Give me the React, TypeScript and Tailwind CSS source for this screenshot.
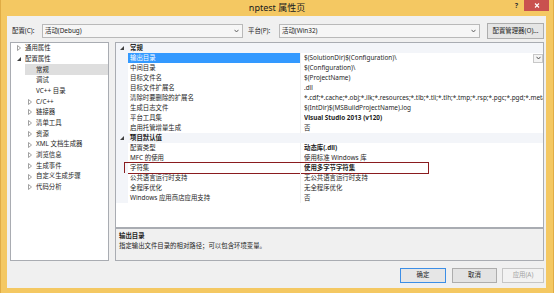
import React from "react";

type TreeItem = { label: string; level: 0 | 1; arrow?: "open" | "closed"; selected?: boolean };

const tree: TreeItem[] = [
  { label: "通用属性", level: 0, arrow: "closed" },
  { label: "配置属性", level: 0, arrow: "open" },
  { label: "常规", level: 1, selected: true },
  { label: "调试", level: 1 },
  { label: "VC++ 目录", level: 1 },
  { label: "C/C++", level: 1, arrow: "closed" },
  { label: "链接器", level: 1, arrow: "closed" },
  { label: "清单工具", level: 1, arrow: "closed" },
  { label: "资源", level: 1, arrow: "closed" },
  { label: "XML 文档生成器", level: 1, arrow: "closed" },
  { label: "浏览信息", level: 1, arrow: "closed" },
  { label: "生成事件", level: 1, arrow: "closed" },
  { label: "自定义生成步骤", level: 1, arrow: "closed" },
  { label: "代码分析", level: 1, arrow: "closed" },
];

type Row = {
  cat?: string;
  name?: string;
  value?: string;
  bold?: boolean;
  selected?: boolean;
  boxed?: boolean;
};

const rows: Row[] = [
  { cat: "常规" },
  { name: "输出目录", value: "$(SolutionDir)$(Configuration)\\", selected: true },
  { name: "中间目录", value: "$(Configuration)\\" },
  { name: "目标文件名", value: "$(ProjectName)" },
  { name: "目标文件扩展名", value: ".dll" },
  {
    name: "清除时要删除的扩展名",
    value: "*.cdf;*.cache;*.obj;*.ilk;*.resources;*.tlb;*.tli;*.tlh;*.tmp;*.rsp;*.pgc;*.pgd;*.meta;*.tl",
  },
  { name: "生成日志文件", value: "$(IntDir)$(MSBuildProjectName).log" },
  { name: "平台工具集", value: "Visual Studio 2013 (v120)", bold: true },
  { name: "启用托管增量生成", value: "否" },
  { cat: "项目默认值" },
  { name: "配置类型", value: "动态库(.dll)", bold: true },
  { name: "MFC 的使用", value: "使用标准 Windows 库" },
  { name: "字符集", value: "使用多字节字符集", bold: true, boxed: true },
  { name: "公共语言运行时支持", value: "无公共语言运行时支持" },
  { name: "全程序优化", value: "无全程序优化" },
  { name: "Windows 应用商店应用支持", value: "否" },
];

function Chevron({ color = "#555" }: { color?: string }) {
  return (
    <svg width="5" height="4" viewBox="0 0 5 4">
      <path d="M0.5 0.8 L2.5 3 L4.5 0.8" fill="none" stroke={color} strokeWidth="0.9" />
    </svg>
  );
}

function ClosedArrow() {
  return (
    <svg width="4" height="6" viewBox="0 0 4 6">
      <path d="M0.5 0.5 L3.5 3 L0.5 5.5 Z" fill="none" stroke="#8a8a8a" strokeWidth="0.8" />
    </svg>
  );
}

function OpenArrow() {
  return (
    <svg width="4" height="4" viewBox="0 0 4 4">
      <path d="M4 0 L4 4 L0 4 Z" fill="#404040" />
    </svg>
  );
}

function Combo({ text }: { text: string }) {
  return (
    <div className="w-[201px] h-[14px] border border-[#b9b9b9] bg-[#f6f6f6] flex items-center justify-between pl-[2px] pr-[3px]">
      <span>{text}</span>
      <Chevron />
    </div>
  );
}

function TreePanel() {
  return (
    <div className="w-[99px] h-full border border-[#a9acb2] bg-white flex flex-col">
      {tree.map((t, i) => (
        <div
          key={i}
          className={`h-[10.7px] shrink-0 flex items-stretch ${t.level === 0 ? "pl-[3px]" : "pl-[14px]"}`}
        >
          <div className={`flex-1 flex items-center ${t.selected ? "bg-[#dedede]" : ""}`}>
            <div className="w-[11px] pl-[3px] flex items-center">
              {t.arrow === "closed" && <ClosedArrow />}
              {t.arrow === "open" && <OpenArrow />}
            </div>
            <span className="whitespace-nowrap">{t.label}</span>
          </div>
        </div>
      ))}
    </div>
  );
}

function PropertyGrid() {
  return (
    <div className="h-[186px] border border-[#a9acb2] bg-white flex flex-col">
      {rows.map((r, i) =>
        r.cat ? (
          <div key={i} className="h-[10px] shrink-0 flex items-center bg-[#f3f5f9]">
            <div className="w-[12px] flex items-center justify-center">
              <OpenArrow />
            </div>
            <span className="pl-[2px] font-bold">{r.cat}</span>
          </div>
        ) : (
          <div key={i} className="h-[10px] shrink-0 flex items-stretch relative">
            <div className="w-[12px] bg-[#f3f5f9]" />
            <div
              className={`w-[172px] flex items-center pl-[2px] whitespace-nowrap ${
                r.selected ? "bg-[#3399ff] text-white" : ""
              }`}
            >
              {r.name}
            </div>
            <div className="flex-1 min-w-0 flex items-center pl-[3px] border-l border-[#f0f0f0]">
              <span
                className={`flex-1 min-w-0 whitespace-nowrap overflow-x-clip leading-[10px] ${
                  r.bold ? "font-bold" : ""
                }`}
              >
                {r.value}
              </span>
              {r.selected && (
                <div className="w-[10px] h-[9px] border border-[#c8c8c8] bg-[#f4f4f4] flex items-center justify-center shrink-0">
                  <Chevron color="#444" />
                </div>
              )}
            </div>
            {r.boxed && (
              <div className="absolute left-[8px] top-[-1px] w-[305px] h-[12px] border-[1.5px] border-[#8a1c1f]" />
            )}
          </div>
        )
      )}
    </div>
  );
}

function Button({
  children,
  width,
  variant = "normal",
}: {
  children: React.ReactNode;
  width: string;
  variant?: "normal" | "default" | "disabled";
}) {
  const cls =
    variant === "default"
      ? "border-[#3c8ee6] bg-[#e6e6e6] text-[#1e1e1e]"
      : variant === "disabled"
      ? "border-[#c6c6c6] bg-[#f2f2f2] text-[#a2a2a2]"
      : "border-[#adadad] bg-[#e3e3e3] text-[#1e1e1e]";
  return (
    <div className={`${width} h-full border flex items-center justify-center ${cls}`}>{children}</div>
  );
}

export default function App() {
  return (
    <div className="w-[554px] h-[293px] bg-[#f4c862] border-l border-r border-[#e0ac45] flex flex-col font-['Noto_Sans','Noto_Sans_CJK_SC',sans-serif] text-[6.4px] leading-none text-[#1e1e1e] overflow-hidden">
      {/* title bar */}
      <div className="h-[16px] shrink-0 grid grid-cols-[1fr_auto_1fr] items-start">
        <div />
        <div className="pt-[3px] text-[9px] leading-[10px] text-[#202020] whitespace-nowrap">nptest 属性页</div>
        <div className="flex justify-end items-start pr-[4px]">
          <span className="mt-[2px] mr-[6px] text-[7px] font-bold text-[#333]">?</span>
          <div className="w-[25px] h-[11px] bg-[#c9514f] flex items-center justify-center">
            <svg width="6" height="5" viewBox="0 0 6 5">
              <path d="M1 0.5 L5 4.5 M5 0.5 L1 4.5" stroke="white" strokeWidth="1.1" />
            </svg>
          </div>
        </div>
      </div>

      {/* client area */}
      <div className="flex-1 ml-[6px] mr-[7px] mb-[5px] bg-[#f0f0f0] flex flex-col">
        {/* config row */}
        <div className="mt-[7px] h-[16px] shrink-0 flex items-center pl-[5px] pr-[2px]">
          <span className="w-[30px] whitespace-nowrap">配置(C):</span>
          <Combo text="活动(Debug)" />
          <span className="ml-[5px] w-[31px] whitespace-nowrap">平台(P):</span>
          <Combo text="活动(Win32)" />
          <div className="ml-[7px] w-[57px] h-[16px] border border-[#adadad] bg-[#e5e5e5] flex items-center justify-center whitespace-nowrap">
            配置管理器(O)...
          </div>
        </div>

        {/* main */}
        <div className="mt-[3px] h-[219px] shrink-0 flex pl-[3px] pr-[2px] gap-[6px]">
          <TreePanel />
          <div className="flex-1 min-w-0 flex flex-col">
            <PropertyGrid />
            <div className="flex-1 border border-[#a9acb2] bg-[#f0f0f0] pl-[3px] pt-[2px] flex flex-col">
              <div className="h-[10px] flex items-center font-bold">输出目录</div>
              <div className="h-[10px] flex items-center">指定输出文件目录的相对路径；可以包含环境变量。</div>
            </div>
          </div>
        </div>

        {/* buttons */}
        <div className="mt-[7px] h-[15px] shrink-0 flex justify-end pr-[2px]">
          <Button width="w-[46px]" variant="default">
            确定
          </Button>
          <div className="w-[6px]" />
          <Button width="w-[45px]">取消</Button>
          <div className="w-[5px]" />
          <Button width="w-[42px]" variant="disabled">
            应用(A)
          </Button>
        </div>
      </div>
    </div>
  );
}
